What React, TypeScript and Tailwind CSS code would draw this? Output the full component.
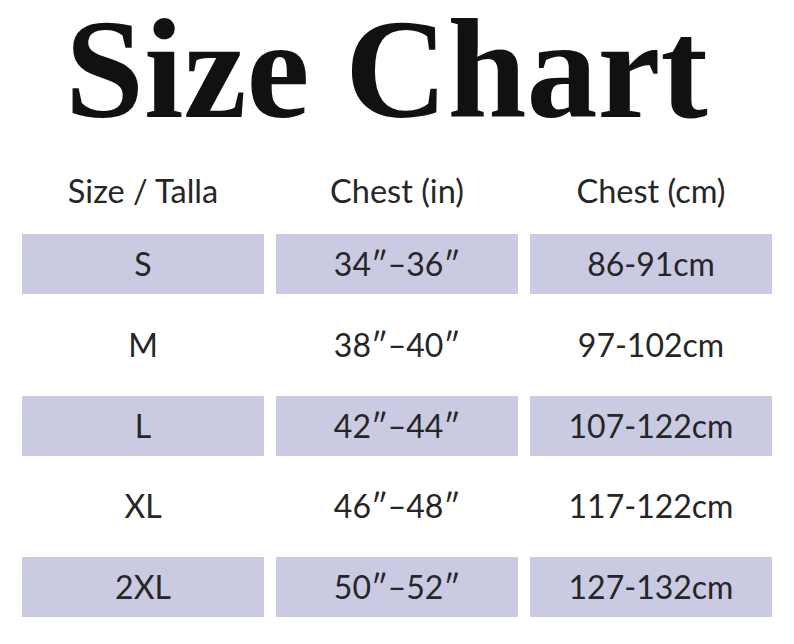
const rows = [
  { size: "S", inches: "34″–36″", cm: "86-91cm", shaded: true },
  { size: "M", inches: "38″–40″", cm: "97-102cm", shaded: false },
  { size: "L", inches: "42″–44″", cm: "107-122cm", shaded: true },
  { size: "XL", inches: "46″–48″", cm: "117-122cm", shaded: false },
  { size: "2XL", inches: "50″–52″", cm: "127-132cm", shaded: true },
];

const headers = ["Size / Talla", "Chest (in)", "Chest (cm)"];

function Cell({ text, shaded }: { text: string; shaded: boolean }) {
  return (
    <div
      className={`flex h-[60px] items-center justify-center ${
        shaded ? "bg-[#cacbe3]" : ""
      }`}
    >
      {text}
    </div>
  );
}

export default function App() {
  return (
    <div className="h-[644px] w-[794px] overflow-hidden bg-white text-[#262626]">
      <h1 className="h-[138px] pr-[21px] text-center font-['Liberation_Serif',serif] text-[142px] font-bold leading-[138px] text-[#111111]">
        Size Chart
      </h1>

      <div className="mt-[33px] grid grid-cols-[242px_242px_242px] gap-x-[12px] px-[22px] font-['Lato',sans-serif] text-[32.5px]">
        {headers.map((h) => (
          <div key={h} className="h-[40px] text-center leading-[40px]">
            {h}
          </div>
        ))}
      </div>

      <div className="mt-[23px] grid grid-cols-[242px_242px_242px] gap-x-[12px] gap-y-[20.75px] px-[22px] font-['Lato',sans-serif] text-[32px]">
        {rows.map((r) => (
          <div key={r.size} className="contents">
            <Cell text={r.size} shaded={r.shaded} />
            <Cell text={r.inches} shaded={r.shaded} />
            <Cell text={r.cm} shaded={r.shaded} />
          </div>
        ))}
      </div>
    </div>
  );
}
